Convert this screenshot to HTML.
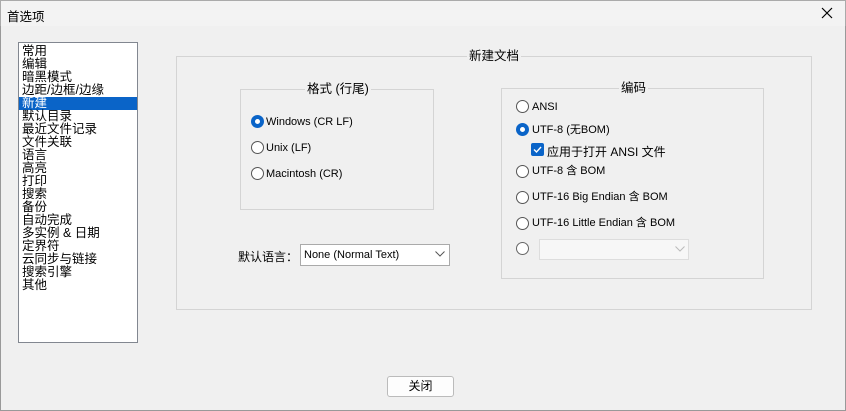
<!DOCTYPE html><html><head><meta charset="utf-8"><style>
*{box-sizing:border-box;margin:0;padding:0}
body{width:846px;height:411px;background:#f0f0f0;font-family:"Liberation Sans","Noto Sans CJK SC",sans-serif;font-size:12px;color:#000;position:relative;overflow:hidden}
.a{position:absolute;white-space:nowrap}
.title{left:0;top:0;width:846px;height:26px;background:#f3f3f3;border:1px solid #aaa;border-bottom:none}
.frame{left:0;top:0;width:846px;height:411px;border:1px solid #999}
.list{left:18px;top:42px;width:120px;height:301px;background:#fff;border:1px solid #828790}
.list div{height:13px;line-height:13px;padding-left:3px;font-size:12.5px}
.sel{background:#0a64c8;color:#fff;margin-left:0}
.grp{border:1px solid #d4d4d4}
.gt{background:#f0f0f0;padding:0 2px;line-height:14px;font-size:12.5px}
.r{width:13px;height:13px;border:1px solid #555;border-radius:50%;background:#fff}
.r.on{border:4px solid #0a64c8}
.lbl{font-size:11px;line-height:13px}
.combo{background:#fff;border:1px solid #aaa}
</style></head><body>
<div class="a frame"></div>
<div class="a title"></div>
<div class="a" style="left:7px;top:6px;font-size:12.5px">首选项</div>
<svg class="a" style="left:821px;top:7px" width="12" height="12"><path d="M1 1L11 11M11 1L1 11" stroke="#000" stroke-width="1.2"/></svg>
<div class="a list"><div style="margin-top:2px">常用</div><div>编辑</div><div>暗黑模式</div><div>边距/边框/边缘</div><div class="sel">新建</div><div>默认目录</div><div>最近文件记录</div><div>文件关联</div><div>语言</div><div>高亮</div><div>打印</div><div>搜索</div><div>备份</div><div>自动完成</div><div>多实例 &amp; 日期</div><div>定界符</div><div>云同步与链接</div><div>搜索引擎</div><div>其他</div></div>
<div class="a grp" style="left:176px;top:56px;width:636px;height:254px"></div>
<div class="a gt" style="left:467px;top:49px">新建文档</div>
<div class="a grp" style="left:240px;top:89px;width:194px;height:121px"></div>
<div class="a gt" style="left:305px;top:82px">格式 (行尾)</div>
<div class="a r on" style="left:251px;top:115px"></div><div class="a lbl" style="left:266px;top:116px">Windows (CR LF)</div>
<div class="a r" style="left:251px;top:141px"></div><div class="a lbl" style="left:266px;top:142px">Unix (LF)</div>
<div class="a r" style="left:251px;top:167px"></div><div class="a lbl" style="left:266px;top:168px">Macintosh (CR)</div>
<div class="a" style="left:238px;top:248px;font-size:12px">默认语言：</div>
<div class="a combo" style="left:300px;top:244px;width:150px;height:22px"></div>
<div class="a lbl" style="left:304px;top:249px">None (Normal Text)</div>
<svg class="a" style="left:435px;top:251px" width="10" height="6"><path d="M0.5 0.5L5 5L9.5 0.5" fill="none" stroke="#555"/></svg>
<div class="a grp" style="left:501px;top:88px;width:263px;height:191px"></div>
<div class="a gt" style="left:619px;top:81px">编码</div>
<div class="a r" style="left:516px;top:100px"></div><div class="a lbl" style="left:532px;top:101px">ANSI</div>
<div class="a r on" style="left:516px;top:123px"></div><div class="a lbl" style="left:532px;top:124px">UTF-8 (无BOM)</div>
<div class="a" style="left:531px;top:143px;width:13px;height:13px;background:#0a64c8;border-radius:2px"></div>
<svg class="a" style="left:531px;top:143px" width="13" height="13"><path d="M3 6.5L5.5 9L10 4" fill="none" stroke="#fff" stroke-width="1.4"/></svg>
<div class="a" style="left:547px;top:143px;font-size:12px">应用于打开 ANSI 文件</div>
<div class="a r" style="left:516px;top:165px"></div><div class="a lbl" style="left:532px;top:165px">UTF-8 含 BOM</div>
<div class="a r" style="left:516px;top:191px"></div><div class="a lbl" style="left:532px;top:191px">UTF-16 Big Endian 含 BOM</div>
<div class="a r" style="left:516px;top:217px"></div><div class="a lbl" style="left:532px;top:217px">UTF-16 Little Endian 含 BOM</div>
<div class="a r" style="left:516px;top:242px;border-color:#666"></div>
<div class="a" style="left:539px;top:239px;width:150px;height:21px;background:#f7f7f7;border:1px solid #ddd"></div>
<svg class="a" style="left:675px;top:246px" width="10" height="6"><path d="M0.5 0.5L5 5L9.5 0.5" fill="none" stroke="#bbb"/></svg>
<div class="a" style="left:387px;top:376px;width:67px;height:21px;background:#fdfdfd;border:1px solid #bbb;border-radius:3px;text-align:center;line-height:19px;font-size:12px">关闭</div>
</body></html>
